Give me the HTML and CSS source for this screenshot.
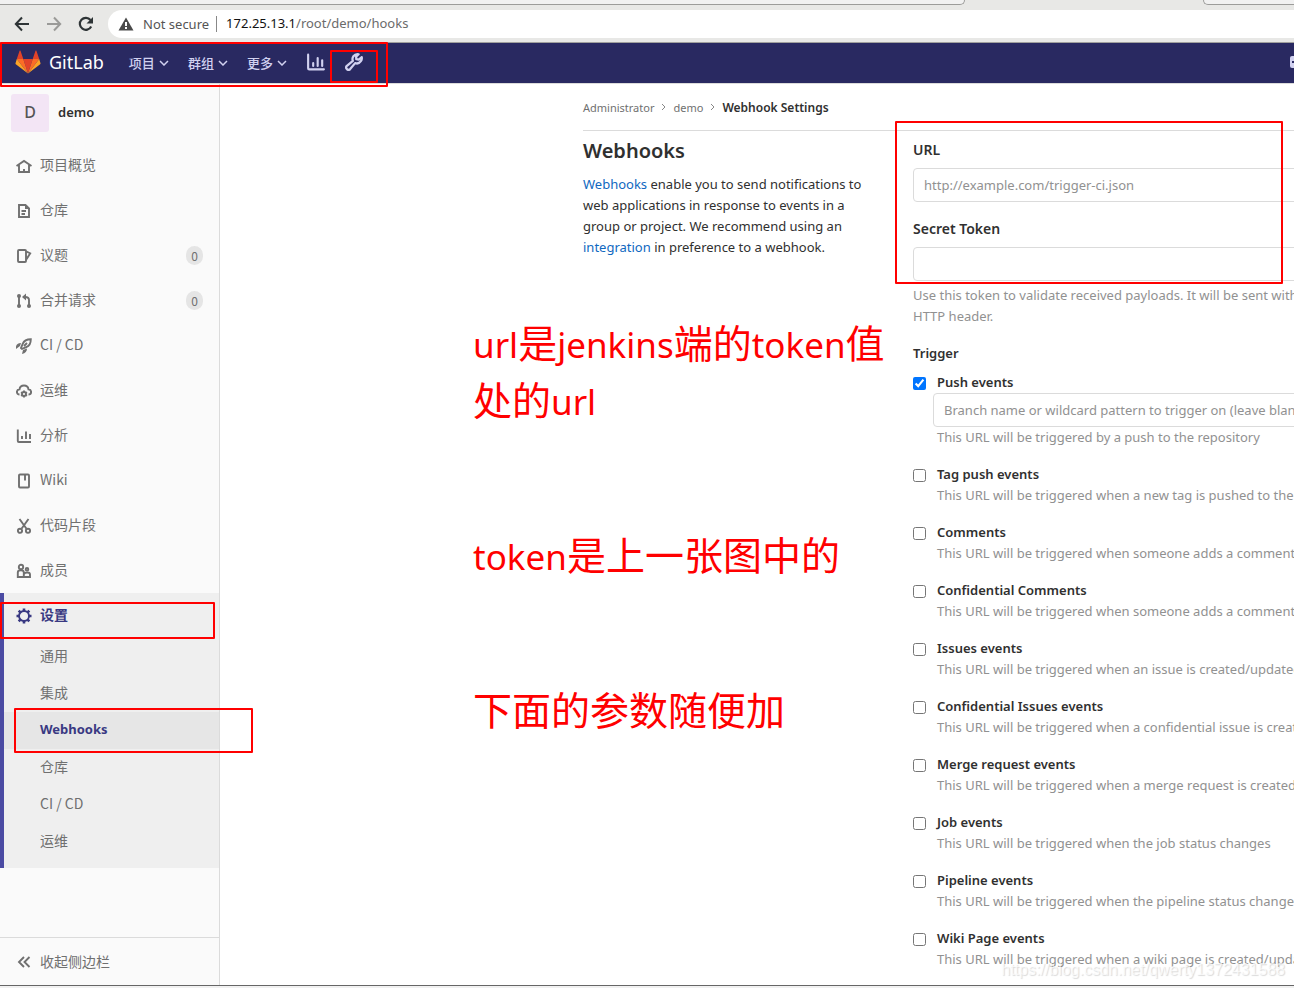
FILE: index.html
```html
<!DOCTYPE html>
<html lang="zh-CN">
<head>
<meta charset="utf-8">
<title>Webhook Settings · demo · GitLab</title>
<link rel="stylesheet" href="styles.css">
</head>
<body>
<div class="window">
  <div class="tabstrip"><span class="tab tab-left"></span><span class="tab tab-right"></span></div>
  <div class="toolbar">
    <button class="tool" aria-label="Back"><svg width="16" height="16" viewBox="0 0 16 16"><path d="M15 8H2M8 1.5 1.8 8 8 14.500" fill="none" stroke="#2e3436" stroke-width="2"/></svg></button>
    <button class="tool" aria-label="Forward"><svg width="16" height="16" viewBox="0 0 16 16"><path d="M1 8h13M8 1.500 14.200 8 8 14.500" fill="none" stroke="#9a9a98" stroke-width="2"/></svg></button>
    <button class="tool" aria-label="Reload"><svg width="16" height="16" viewBox="0 0 16 16"><path d="M13.200 10.500A6 6 0 1 1 12.500 4" fill="none" stroke="#2e3436" stroke-width="2.200"/><path d="M15 1v6.500H8.500z" fill="#2e3436"/></svg></button>
    <div class="omnibox">
      <svg width="16" height="14" viewBox="0 0 16 14"><path d="M8 .5 15.500 13.500H.5z" fill="#4a4a4a"/><path d="M7 5h2v4H7zM7 10h2v2H7z" fill="#fff"/></svg>
      <span class="insecure">Not secure</span>
      <span class="address"><b>172.25.13.1</b>/root/demo/hooks</span>
    </div>
  </div>

  <header class="navbar">
    <a class="brand" href="#"><svg width="26" height="24" viewBox="0 0 26 24"><path d="M13 23.500 17.700 9H8.300z" fill="#e24329"/><path d="M13 23.500 8.300 9H1.800zM13 23.500 17.700 9h6.500z" fill="#fc6d26"/><path d="M1.800 9 .5 13.200c-.1.400 0 .8.300 1L13 23.500zM24.200 9l1.300 4.200c.1.400 0 .8-.3 1L13 23.500z" fill="#fca326"/><path d="M1.800 9h6.500L5.500.8c-.1-.4-.7-.4-.9 0zM24.200 9h-6.500L20.500.8c.1-.4.7-.4.9 0z" fill="#e24329"/></svg><span>GitLab</span></a>
    <nav class="menu">
      <button>项目<svg width="10" height="8" viewBox="0 0 10 8"><path d="m1 3 4 4 4-4"/></svg></button>
      <button>群组<svg width="10" height="8" viewBox="0 0 10 8"><path d="m1 3 4 4 4-4"/></svg></button>
      <button>更多<svg width="10" height="8" viewBox="0 0 10 8"><path d="m1 3 4 4 4-4"/></svg></button>
    </nav>
    <a class="nav-icon" href="#" aria-label="Analytics"><svg width="18" height="18" viewBox="0 0 16 16"><path d="M1 1.500v12a1 1 0 0 0 1 1h13M5.500 9v2.500M9.500 4.500v7M13.500 6.500v5" fill="none" stroke="#d1d1f0" stroke-width="1.900" stroke-linecap="round"/></svg></a>
    <a class="nav-icon" href="#" aria-label="Admin"><svg width="18" height="18" viewBox="0 0 16 16"><path d="M7 7 1.700 11.400a1.900 1.900 0 0 0 2.900 2.900L9 9c1.900.7 4-.1 5.100-1.700.8-1.100 1-2.500.8-3.600L12.200 5.800 10 5.400 9.900 3.200 12.100 1.100C10.300.8 8.500 1.500 7.500 2.900 6.600 4.200 6.400 5.700 7 7z" fill="none" stroke="#d1d1f0" stroke-width="2" stroke-linejoin="round"/></svg></a>
    <button class="create" aria-label="New"><svg width="16" height="16" viewBox="0 0 16 16"><rect x="1" y="2" width="14" height="12" rx="2" fill="#d1d1f0"/><path d="M8 5v6M3 8h10" stroke="#292961" stroke-width="2"/></svg></button>
  </header>

  <div class="page">
    <aside class="sidebar">
      <a class="project" href="#"><span class="avatar">D</span><span>demo</span></a>
      <nav>
        <a class="item" href="#"><svg viewBox="0 0 16 16"><path d="M.5 8 8 3l7.500 5M3 7v7h10V7M8 11v3"/></svg><span>项目概览</span></a>
        <a class="item" href="#"><svg viewBox="0 0 16 16"><path d="M3 2h6.500L13 5.500V14H3zM5.500 8H10M5.500 11H9"/><path class="solid" d="M9 1l5 5H9z"/></svg><span>仓库</span></a>
        <a class="item" href="#"><svg viewBox="0 0 16 16"><path d="M3 2h6a1 1 0 0 1 1 1v10a1 1 0 0 1-1 1H3a1 1 0 0 1-1-1V3a1 1 0 0 1 1-1zM10.500 3.500l3.700 1.800-3.700 6"/></svg><span>议题</span><span class="count">0</span></a>
        <a class="item" href="#"><svg viewBox="0 0 16 16"><path d="M3 3v10M13 13V7c0-2-1-3-4-3"/><circle class="solid" cx="3" cy="3" r="2"/><circle class="solid" cx="3" cy="13" r="2"/><circle class="solid" cx="13" cy="13" r="2"/><path class="solid" d="m6 4 4-3.500v7z"/></svg><span>合并请求</span><span class="count">0</span></a>
        <a class="item" href="#"><svg viewBox="0 0 16 16"><path d="M14.800 1.200c-4 0-6.800 1.500-8 4.500L5 10l1 1 4.300-1.800c3-1.200 4.500-4 4.500-8zM8 8l3-3"/><path class="solid" d="M0 8.500C.5 6.500 2 5 5 5L4 8 0 11zM7 12l4-1.500c0 3-1.500 4.500-5 5.500z"/></svg><span>CI / CD</span></a>
        <a class="item" href="#"><svg viewBox="0 0 16 16"><path d="M3.500 11.500C2 11.500.9 10.300.9 9S2 6.500 3.500 6.300C3.800 4 5.700 2.500 8 2.500s4.200 1.500 4.500 3.800c1.500.2 2.600 1.400 2.600 2.700s-1.100 2.500-2.600 2.500"/><circle cx="8" cy="11" r="2"/><path d="M8 7.500V9M8 13v1.500M5 9.200l1.200.8M9.800 12l1.200.8M11 9.200l-1.200.8M6.200 12l-1.200.8"/></svg><span>运维</span></a>
        <a class="item" href="#"><svg viewBox="0 0 16 16"><path d="M1.800 1.500V13a1 1 0 0 0 1 1H15M6 8v3M10 3.500V11M14 6v5"/></svg><span>分析</span></a>
        <a class="item" href="#"><svg viewBox="0 0 16 16"><path d="M4 1.500h8a1 1 0 0 1 1 1v11a1 1 0 0 1-1 1H4a1 1 0 0 1-1-1v-11a1 1 0 0 1 1-1zM9 2v5.500"/></svg><span>Wiki</span></a>
        <a class="item" href="#"><svg viewBox="0 0 16 16"><path d="m3.500 1 7 9.800M12.500 1l-7 9.800"/><circle cx="4" cy="12.800" r="2.100"/><circle cx="12" cy="12.800" r="2.100"/></svg><span>代码片段</span></a>
        <a class="item" href="#"><svg viewBox="0 0 16 16"><path d="M1.800 14v-4.500c0-3 6-3 6 0V14zM8 14h6v-2.500c0-2.500-5-2.500-6-.5"/><circle cx="5" cy="4" r="2.200"/><circle cx="11" cy="6.300" r="1.300"/></svg><span>成员</span></a>
        <div class="section">
          <a class="item current" href="#"><svg viewBox="0 0 16 16"><circle cx="8" cy="8" r="5"/><path d="M8 .5V3M8 13v2.500M.5 8H3M13 8h2.500M2.700 2.700l1.800 1.800M11.500 11.500l1.800 1.800M13.300 2.700l-1.800 1.800M4.500 11.500l-1.800 1.800" stroke-width="2.600"/></svg><span>设置</span></a>
          <a class="sub" href="#">通用</a>
          <a class="sub" href="#">集成</a>
          <a class="sub active" href="#">Webhooks</a>
          <a class="sub" href="#">仓库</a>
          <a class="sub" href="#">CI / CD</a>
          <a class="sub" href="#">运维</a>
        </div>
      </nav>
      <button class="collapse"><svg viewBox="0 0 16 16"><path d="M8 3 3 8l5 5M13.500 3l-5 5 5 5"/></svg><span>收起侧边栏</span></button>
    </aside>

    <main class="content">
      <nav class="crumbs">
        <a href="#">Administrator</a><svg width="5" height="8" viewBox="0 0 5 8"><path d="m1 1 3 3-3 3"/></svg><a href="#">demo</a><svg width="5" height="8" viewBox="0 0 5 8"><path d="m1 1 3 3-3 3"/></svg><strong>Webhook Settings</strong>
      </nav>
      <div class="columns">
        <section class="intro">
          <h1>Webhooks</h1>
          <p><a href="#">Webhooks</a> enable you to send notifications to web applications in response to events in a group or project. We recommend using an <a href="#">integration</a> in preference to a webhook.</p>
        </section>
        <form class="form">
          <div class="field"><label for="url">URL</label><input class="text" id="url" type="text" placeholder="http://example.com/trigger-ci.json"></div>
          <div class="field"><label for="token">Secret Token</label><input class="text" id="token" type="text"><p class="hint">Use this token to validate received payloads. It will be sent with the<br>HTTP header.</p></div>
          <h2>Trigger</h2>
          <div class="event"><input type="checkbox" id="e1" checked><div><label for="e1">Push events</label><input class="text branch" type="text" aria-label="Branch filter" placeholder="Branch name or wildcard pattern to trigger on (leave blank for all)"><p>This URL will be triggered by a push to the repository</p></div></div>
          <div class="event"><input type="checkbox" id="e2"><div><label for="e2">Tag push events</label><p>This URL will be triggered when a new tag is pushed to the repository</p></div></div>
          <div class="event"><input type="checkbox" id="e3"><div><label for="e3">Comments</label><p>This URL will be triggered when someone adds a comment</p></div></div>
          <div class="event"><input type="checkbox" id="e4"><div><label for="e4">Confidential Comments</label><p>This URL will be triggered when someone adds a comment on a confidential issue</p></div></div>
          <div class="event"><input type="checkbox" id="e5"><div><label for="e5">Issues events</label><p>This URL will be triggered when an issue is created/updated/merged</p></div></div>
          <div class="event"><input type="checkbox" id="e6"><div><label for="e6">Confidential Issues events</label><p>This URL will be triggered when a confidential issue is created/updated/merged</p></div></div>
          <div class="event"><input type="checkbox" id="e7"><div><label for="e7">Merge request events</label><p>This URL will be triggered when a merge request is created/updated/merged</p></div></div>
          <div class="event"><input type="checkbox" id="e8"><div><label for="e8">Job events</label><p>This URL will be triggered when the job status changes</p></div></div>
          <div class="event"><input type="checkbox" id="e9"><div><label for="e9">Pipeline events</label><p>This URL will be triggered when the pipeline status changes</p></div></div>
          <div class="event"><input type="checkbox" id="e10"><div><label for="e10">Wiki Page events</label><p>This URL will be triggered when a wiki page is created/updated</p></div></div>
        </form>
      </div>
    </main>
  </div>
  <div class="bottom-edge"></div>

  <div class="mark mark-nav"></div>
  <div class="mark mark-wrench"></div>
  <div class="mark mark-form"></div>
  <div class="mark mark-settings"></div>
  <div class="mark mark-webhooks"></div>
  <p class="note note-url"><span>url</span>是<span>jenkins</span>端的<span>token</span>值<br>处的<span>url</span></p>
  <p class="note note-token"><span>token</span>是上一张图中的</p>
  <p class="note note-rest">下面的参数随便加</p>
  <span class="watermark">https://blog.csdn.net/qwerty1372431588</span>
</div>
</body>
</html>
```

FILE: styles.css
```css
* { box-sizing: border-box; }
body {
  margin: 0;
  font: 13px/21px "Noto Sans", "Noto Sans CJK SC", sans-serif;
  color: #303030;
  background: #fff;
}
h1, h2, p { margin: 0; }
a { color: inherit; text-decoration: none; }
button { font: inherit; color: inherit; background: none; border: 0; padding: 0; }
svg { flex: none; }
.window {
  position: relative;
  display: flex;
  flex-direction: column;
  min-height: 100vh;
  overflow: hidden;
}

/* Browser chrome */
.tabstrip { display: flex; justify-content: space-between; height: 5px; background: #e8e8e6; }
.tab { background: #f1f1f1; border-bottom: 1px solid #9c9c9a; }
.tab-left { width: 965px; border-right: 1px solid #9c9c9a; border-radius: 0 0 8px 0; }
.tab-right { width: 91px; border-left: 1px solid #9c9c9a; border-radius: 0 0 0 8px; }
.toolbar {
  display: flex;
  align-items: center;
  gap: 16px;
  height: 38px;
  padding-left: 14px;
  background: #e8e8e6;
  border-bottom: 1px solid #a0a09e;
}
.tool { display: flex; width: 16px; height: 16px; }
.tool + .omnibox { margin-left: -2px; }
.omnibox {
  flex: 1;
  display: flex;
  align-items: center;
  gap: 9px;
  height: 28px;
  padding-left: 10px;
  background: #fff;
  border-radius: 14px 0 0 14px;
}
.insecure { color: #555; padding-right: 7px; border-right: 1px solid #888; line-height: 16px; }
.address { color: #6b6b6b; }
.address b { font-weight: 400; color: #111; }

/* Navigation bar */
.navbar {
  display: flex;
  align-items: center;
  height: 41px;
  padding: 0 0 2px 15px;
  background: #292961;
  border-bottom: 1px solid #dbdbdb;
  color: #d1d1f0;
}
.brand { display: flex; align-items: center; gap: 8px; color: #fff; font-size: 18px; }
.menu { display: flex; gap: 19px; margin-left: 25px; }
.menu button { display: flex; align-items: center; gap: 4px; font-family: "Noto Sans CJK SC", sans-serif; font-weight: 500; }
.menu path { fill: none; stroke: #d1d1f0; stroke-width: 1.500; }
.nav-icon { display: flex; margin-left: 20px; }
.create { display: flex; margin-left: auto; margin-right: -11px; }

/* Sidebar */
.page { flex: 1; display: flex; }
.sidebar {
  flex: none;
  display: flex;
  flex-direction: column;
  width: 220px;
  background: #fafafa;
  border-right: 1px solid #dbdbdb;
  color: #707070;
  font-family: "Noto Sans CJK SC", sans-serif;
  font-size: 14px;
}
.project {
  display: flex;
  align-items: center;
  gap: 9px;
  height: 59px;
  padding: 0 0 2px 11px;
  color: #303030;
  font-family: "Noto Sans", sans-serif;
  font-size: 13px;
  font-weight: 600;
}
.avatar {
  width: 38px;
  height: 38px;
  border-radius: 3px;
  background: #f3e5f5;
  color: #555;
  font-weight: 500;
  font-size: 16px;
  line-height: 36px;
  text-align: center;
}
.item { display: flex; align-items: center; gap: 8px; height: 45px; padding: 0 16px; }
.item span { padding-bottom: 2px; }
.item svg, .collapse svg {
  width: 16px;
  height: 16px;
  fill: none;
  stroke: currentColor;
  stroke-width: 1.900;
}
.item .solid { fill: currentColor; stroke: none; }
.item .count {
  margin-left: auto;
  width: 17px;
  padding: 0;
  border-radius: 10px;
  background: #e5e5e5;
  font-size: 12px;
  line-height: 19px;
  text-align: center;
}
.section { background: #efefef; box-shadow: inset 4px 0 #4b4ba3; padding-bottom: 8px; }
.current, .active { color: #393982; font-weight: 700; }
.sub { display: block; padding: 7px 0 9px 36px; margin-left: 4px; }
.active { background: #e6e6e6; font-family: "Noto Sans", sans-serif; font-size: 13px; }
.collapse {
  display: flex;
  align-items: center;
  gap: 8px;
  height: 48px;
  margin-top: auto;
  padding-left: 16px;
  border-top: 1px solid #dbdbdb;
}

/* Content */
.content { flex: 1; min-width: 0; padding-left: 363px; margin-right: -40px; }
.crumbs {
  display: flex;
  align-items: center;
  gap: 7px;
  height: 47px;
  border-bottom: 1px solid #dbdbdb;
  font-size: 11px;
  color: #707070;
}
.crumbs path { fill: none; stroke: #888; }
.crumbs strong { color: #303030; font-size: 12px; font-weight: 600; }
.columns { display: grid; grid-template-columns: 290px minmax(0, 1fr); gap: 40px; padding-top: 8px; }
.intro h1 { font-size: 20px; line-height: 24px; font-weight: 600; margin-bottom: 11px; }
.intro a { color: #1068bf; }
.field { margin-bottom: 16px; }
.form label, .form h2 { display: block; font-size: 13px; line-height: 21px; font-weight: 600; }
.form h2 { margin-bottom: 8px; }
.form p { color: #919191; white-space: nowrap; }
.form .field label { margin-bottom: 8px; font-size: 14px; }
.text {
  display: block;
  width: 100%;
  height: 34px;
  padding: 0 10px;
  border: 1px solid #dbdbdb;
  border-radius: 4px;
  background: #fff;
  font: inherit;
  color: #303030;
}
.text::placeholder { color: #919191; opacity: 1; }
.hint { margin-top: 4px; }
.event { display: flex; align-items: flex-start; gap: 11px; margin-bottom: 16px; }
.event:last-child { margin-bottom: 0; }
.event > div { flex: 1; min-width: 0; }
.event input[type="checkbox"] { flex: none; width: 13px; height: 13px; margin: 5px 0 0; accent-color: #0075ff; }
.event .branch { margin-left: -4px; }

.bottom-edge { height: 3px; border-top: 1px solid #666; background: #f1f1f1; }

/* Annotations over the page */
.mark { position: absolute; border: 2px solid #f00; border-radius: 1px; pointer-events: none; }
.mark-nav { left: 0; top: 42px; width: 388px; height: 45px; }
.mark-wrench { left: 330px; top: 50px; width: 48px; height: 33px; }
.mark-form { left: 895px; top: 121px; width: 388px; height: 163px; }
.mark-settings { left: 0; top: 602px; width: 215px; height: 37px; }
.mark-webhooks { left: 14px; top: 708px; width: 239px; height: 45px; }
.note {
  position: absolute;
  left: 473px;
  color: #f00;
  font: 39px/57px "Noto Sans CJK SC", sans-serif;
  white-space: nowrap;
}
.note span { font-family: "Noto Sans", sans-serif; font-size: 35px; line-height: 1; }
.note-url { top: 313px; }
.note-token { top: 525px; }
.note-rest { top: 680px; }
.watermark {
  position: absolute;
  right: 9px;
  bottom: 8px;
  color: rgba(255, 255, 255, 0.7);
  font: 16px/20px "Liberation Sans", sans-serif;
  text-shadow: 1px 1px 1px rgba(0, 0, 0, 0.15);
}
```
